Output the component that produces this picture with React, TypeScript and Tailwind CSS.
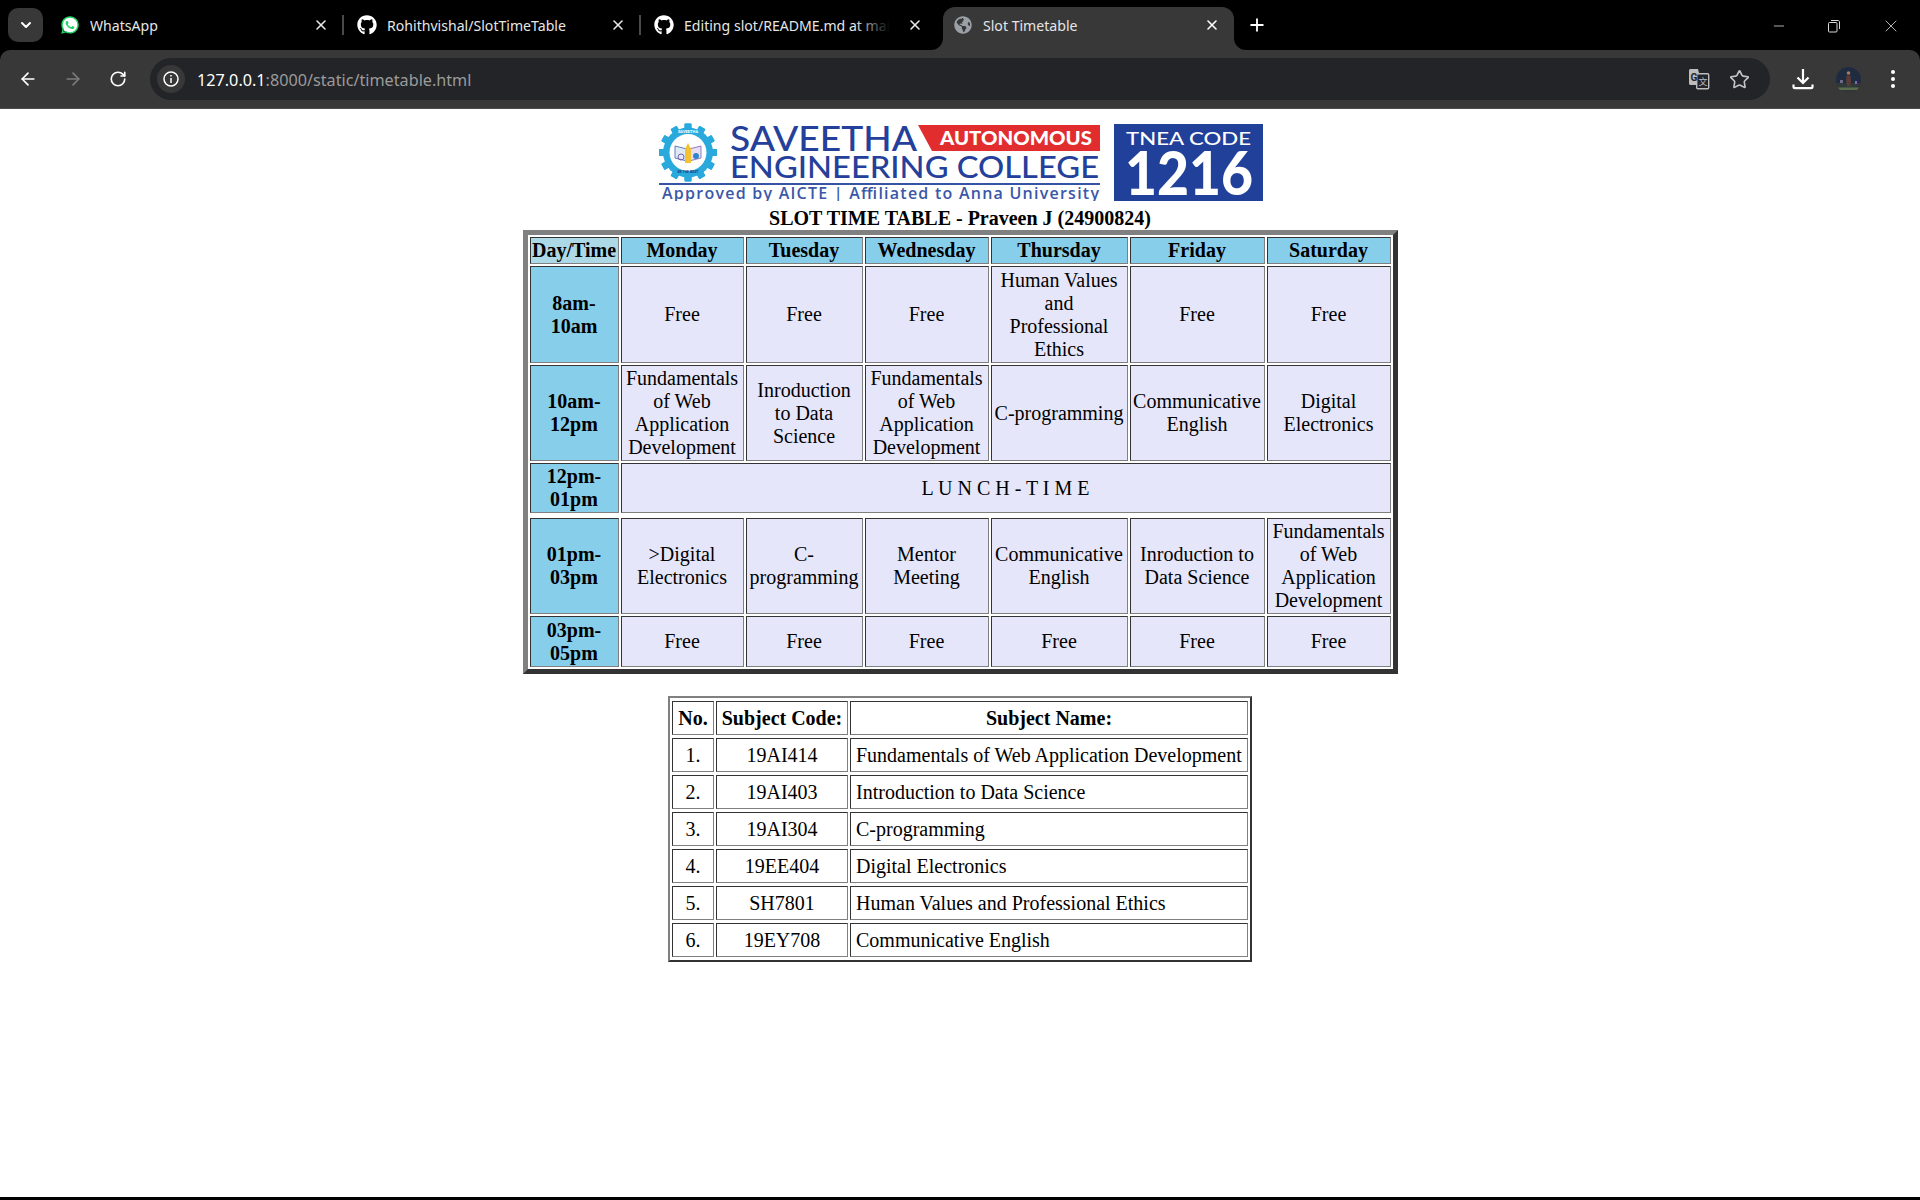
import React from "react";
import { ArrowLeft, ArrowRight, ChevronDown, Minus, Plus, RotateCw, Star, X } from "lucide-react";
import { FaGithub, FaGlobeAmericas, FaWhatsapp } from "react-icons/fa";

const timeCell =
  "bg-[#87ceeb] border border-t-[#333] border-l-[#333] border-r-[#808080] border-b-[#808080] p-px text-center font-bold";
const headCell =
  "bg-[#87ceeb] border border-t-[#333] border-l-[#333] border-r-[#808080] border-b-[#808080] p-px text-center font-bold";
const slotCell =
  "bg-[#e6e6fa] border border-t-[#333] border-l-[#333] border-r-[#808080] border-b-[#808080] p-px text-center font-normal whitespace-pre-line";
const subCell =
  "h-[34px] border border-t-[#333] border-l-[#333] border-r-[#808080] border-b-[#808080] py-0 px-[5px]";

const days = ["Monday", "Tuesday", "Wednesday", "Thursday", "Friday", "Saturday"];

const rows = [
  { time: "8am-10am", height: "h-[97px]", slots: ["Free", "Free", "Free", "Human Values\nand\nProfessional\nEthics", "Free", "Free"] },
  {
    time: "10am-12pm",
    height: "",
    slots: [
      "Fundamentals of Web Application Development",
      "Inroduction to Data Science",
      "Fundamentals of Web Application Development",
      "C-programming",
      "Communicative English",
      "Digital Electronics",
    ],
  },
];

const rowsAfterLunch = [
  {
    time: "01pm-03pm",
    height: "",
    slots: [
      ">Digital Electronics",
      "C-programming",
      "Mentor Meeting",
      "Communicative English",
      "Inroduction to Data Science",
      "Fundamentals of Web Application Development",
    ],
  },
  { time: "03pm-05pm", height: "h-[51px]", slots: ["Free", "Free", "Free", "Free", "Free", "Free"] },
];

const subjects = [
  ["1.", "19AI414", "Fundamentals of Web Application Development"],
  ["2.", "19AI403", "Introduction to Data Science"],
  ["3.", "19AI304", "C-programming"],
  ["4.", "19EE404", "Digital Electronics"],
  ["5.", "SH7801", "Human Values and Professional Ethics"],
  ["6.", "19EY708", "Communicative English"],
];

const teeth = [0, 30, 60, 90, 120, 150, 180, 210, 240, 270, 300, 330];

const SlotRow = ({ time, slots, height }: { time: string; slots: string[]; height: string }) => (
  <tr className={height}>
    <th className={timeCell}>{time}</th>
    {slots.map((s, i) => (
      <td key={i} className={slotCell}>
        {s}
      </td>
    ))}
  </tr>
);

const Tab = ({ icon, title, fade }: { icon: React.ReactNode; title: string; fade?: boolean }) => (
  <div className="relative flex h-[36px] w-[297px] items-center pl-[13px]">
    <div className="flex w-[20px] justify-center">{icon}</div>
    <div className="relative ml-[10px] w-[221px] overflow-hidden whitespace-nowrap text-[14.1px] text-[#e6e6e6]">
      {title}
      {fade && <div className="absolute inset-y-0 right-0 w-[50px] bg-gradient-to-r from-transparent via-black via-70% to-black" />}
    </div>
    <X size={16} strokeWidth={2.4} className="ml-[2px] text-[#e8e8e8]" />
    {!fade && <div className="absolute right-0 top-[8px] h-[20px] w-[2px] bg-[#4a4a4a]" />}
  </div>
);

const WhatsAppIcon = () => (
  <div className="relative h-[20px] w-[20px]">
    <div className="absolute left-[2px] top-[2px] h-[16px] w-[16px] rounded-full bg-white" />
    <FaWhatsapp size={20} className="absolute left-0 top-0 text-[#25d366]" />
  </div>
);

const TranslateIcon = () => (
  <svg width="22" height="22" viewBox="0 0 22 22">
    <path d="M1 2.500C1 1.700 1.700 1 2.500 1h7.500l4 16H2.500C1.700 17 1 16.300 1 15.500z" fill="#bdbdbd" />
    <rect x="8.700" y="5.700" width="12" height="15" rx="1" fill="#23252a" stroke="#bdbdbd" strokeWidth="1.400" />
    <text x="2.500" y="12.500" fontSize="10" fontWeight="700" fontFamily="Roboto, sans-serif" fill="#23252a">G</text>
    <text x="10.500" y="16.500" fontSize="9" fontFamily="'Noto Sans CJK SC', sans-serif" fill="#bdbdbd">文</text>
  </svg>
);

const DownloadIcon = () => (
  <svg width="22" height="24" viewBox="0 0 22 24" fill="none" stroke="#ffffff" strokeWidth="2.200">
    <path d="M11 2v13M5.500 10.500 11 16l5.500-5.500" />
    <path d="M1.500 17.500v2.200c0 .9.700 1.400 1.500 1.400h16c.8 0 1.500-.5 1.500-1.400v-2.200" />
  </svg>
);

const Avatar = () => (
  <svg width="25" height="25" viewBox="0 0 25 25">
    <circle cx="12.500" cy="12.500" r="12.500" fill="#1f2b3f" />
    <path d="M0.500 16h24a12.500 12.500 0 0 1-24 0z" fill="#2f3a38" />
    <path d="M2 20.500h21l-2 2.500H4z" fill="#5b6b4e" />
    <circle cx="12.500" cy="6" r="1.800" fill="#a87b63" />
    <path d="M10.500 8.500h4l.6 6-1 5h-3l-1-5z" fill="#5a3a36" />
    <rect x="4" y="13" width="3" height="3" fill="#6f6a88" />
    <rect x="19" y="14" width="2" height="3" fill="#8a63b8" />
  </svg>
);

const CollegeLogo = () => (
  <svg width="605" height="78" viewBox="658 123 605 78">
    {/* emblem */}
    {teeth.map((a) => (
      <rect key={a} x="684.500" y="123.500" width="7" height="58" rx="1" fill="#2aa9dd" transform={`rotate(${a} 688 152.500)`} />
    ))}
    <circle cx="688" cy="152.500" r="25" fill="#2aa9dd" />
    <circle cx="688" cy="152.500" r="18.500" fill="#ffffff" />
    <path d="M675 146l12 3v12l-12-3z" fill="#dfeaf6" stroke="#3b62ad" strokeWidth=".8" />
    <path d="M701 146l-12 3v12l12-3z" fill="#e8def3" stroke="#7a5fb0" strokeWidth=".8" />
    <path d="M688 143l3 6v14h-6v-14z" fill="#f2c230" />
    <circle cx="681" cy="157" r="3" fill="none" stroke="#7a5fb0" strokeWidth="1" />
    <circle cx="696" cy="156" r="3" fill="#2e86c8" />
    <text x="688" y="133" textAnchor="middle" fontSize="4" fontWeight="700" fontFamily="Roboto, sans-serif" fill="#ffffff">SAVEETHA</text>
    <text x="688" y="173" textAnchor="middle" fontSize="3.500" fontWeight="700" fontFamily="Roboto, sans-serif" fill="#1b3f8f">BE THE BEST</text>

    {/* wordmark */}
    <text x="730" y="151" fontSize="35" fontWeight="500" fontFamily="Lato, sans-serif" fill="#24409a" textLength="187" lengthAdjust="spacingAndGlyphs">SAVEETHA</text>
    <polygon points="918,125 1100,125 1100,151 932,151" fill="#e22d2f" />
    <text x="940" y="144.500" fontSize="19" fontWeight="900" fontFamily="Lato, sans-serif" fill="#ffffff" textLength="152" lengthAdjust="spacingAndGlyphs">AUTONOMOUS</text>
    <text x="730" y="178" fontSize="30" fontWeight="500" fontFamily="Lato, sans-serif" fill="#24409a" textLength="369" lengthAdjust="spacingAndGlyphs">ENGINEERING COLLEGE</text>
    <rect x="659" y="183" width="441" height="2" fill="#3653a6" />
    <text x="662" y="199" fontSize="16" fontWeight="600" fontFamily="'Open Sans', sans-serif" fill="#3b57a8" textLength="437" lengthAdjust="spacing">Approved by AICTE  |  Affiliated to Anna University</text>

    {/* code box */}
    <rect x="1114" y="124" width="149" height="77" fill="#20409a" />
    <text x="1126" y="145" fontSize="18" fontWeight="500" fontFamily="Lato, sans-serif" fill="#ffffff" textLength="125" lengthAdjust="spacingAndGlyphs">TNEA CODE</text>
    <text x="1125" y="195" fontSize="60" fontWeight="900" fontFamily="Lato, sans-serif" fill="#ffffff" textLength="128" lengthAdjust="spacingAndGlyphs">1216</text>
  </svg>
);

const App = () => {
  return (
    <div className="flex min-h-[1200px] flex-col bg-white font-['Liberation_Serif',serif] text-[20px] leading-[23px] text-black">
      {/* tab strip */}
      <div className="flex h-[50px] items-start bg-black pl-[8px] font-['Noto_Sans',sans-serif]">
        <div className="mt-[8px] flex h-[34px] w-[35px] items-center justify-center rounded-[10px] bg-[#383838]">
          <ChevronDown size={16} strokeWidth={3} className="text-white" />
        </div>
        <div className="ml-[4px] mt-[7px] flex">
          <Tab icon={<WhatsAppIcon />} title="WhatsApp" />
          <Tab icon={<FaGithub size={20} className="text-white" />} title="Rohithvishal/SlotTimeTable" />
          <Tab icon={<FaGithub size={20} className="text-white" />} title="Editing slot/README.md at main" fade />
          <div className="relative ml-[5px] flex h-[43px] w-[291px] items-start rounded-t-[12px] bg-[#383838] pl-[11px] pt-[7px]">
            <div className="absolute bottom-0 right-full h-[12px] w-[12px] bg-[#383838]">
              <div className="h-full w-full rounded-br-[12px] bg-black" />
            </div>
            <div className="absolute bottom-0 left-full h-[12px] w-[12px] bg-[#383838]">
              <div className="h-full w-full rounded-bl-[12px] bg-black" />
            </div>
            <FaGlobeAmericas size={18} className="mt-[2px] text-[#9aa0a6]" />
            <div className="ml-[11px] w-[220px] whitespace-nowrap text-[14.1px] text-[#e6e6e6]">Slot Timetable</div>
            <X size={16} strokeWidth={2.4} className="ml-[1px] mt-[3px] text-white" />
          </div>
        </div>
        <Plus size={20} strokeWidth={2.2} className="ml-[13px] mt-[15px] text-white" />
        <div className="ml-auto flex items-center pt-[16px] text-[#d8d8d8]">
          <Minus size={16} strokeWidth={1.2} className="mr-px" />
          <svg width="14" height="14" viewBox="0 0 14 14" fill="none" stroke="#d8d8d8" strokeWidth="1" className="ml-[39px]">
            <rect x="1.500" y="3.500" width="8.500" height="9.500" rx="1" />
            <path d="M4 1.500h7c1 0 1.500.5 1.500 1.500v7" />
          </svg>
          <X size={20} strokeWidth={1} className="ml-[40px] mr-[19px]" />
        </div>
      </div>

      {/* toolbar */}
      <div className="bg-black">
        <div className="flex h-[59px] items-center rounded-t-[10px] border-b border-b-[#4b4b4b] bg-[#383838] pl-[18px] pr-[18px] font-['Noto_Sans',sans-serif]">
          <ArrowLeft size={20} strokeWidth={2} className="text-white" />
          <ArrowRight size={20} strokeWidth={2} className="ml-[25px] text-[#7c7c7c]" />
          <RotateCw size={18} strokeWidth={2.2} className="ml-[26px] text-white" />
          <div className="ml-[23px] flex h-[42px] w-[1620px] items-center rounded-full bg-[#232427] pl-[7px] pr-[20px]">
            <div className="flex h-[28px] w-[28px] items-center justify-center rounded-full bg-[#383838]">
              <svg width="16" height="16" viewBox="0 0 16 16" fill="none" stroke="#ffffff" strokeWidth="1.500">
                <circle cx="8" cy="8" r="7" />
                <path d="M8 7v5M8 4v1.500" />
              </svg>
            </div>
            <div className="ml-[12px] mt-[2px] whitespace-nowrap text-[16.2px] text-white">
              127.0.0.1<span className="text-[#9b9b9b]">:8000/static/timetable.html</span>
            </div>
            <div className="ml-auto flex items-center gap-[19px]">
              <TranslateIcon />
              <Star size={21} strokeWidth={1.9} className="text-[#c4c4c4]" />
            </div>
          </div>
          <div className="ml-[22px]">
            <DownloadIcon />
          </div>
          <div className="ml-[22px]">
            <Avatar />
          </div>
          <div className="ml-[30px] flex flex-col gap-[3px]">
            <div className="h-[4px] w-[4px] rounded-full bg-white" />
            <div className="h-[4px] w-[4px] rounded-full bg-white" />
            <div className="h-[4px] w-[4px] rounded-full bg-white" />
          </div>
        </div>
      </div>

      {/* page */}
      <div className="flex flex-1 flex-col items-center pt-[14px]">
        <CollegeLogo />
        <div className="mt-[6px] text-center font-bold">SLOT TIME TABLE - Praveen J (24900824)</div>

        <table className="w-[875px] table-fixed border-separate border-spacing-[2px] border-[5px] border-t-[#808080] border-l-[#808080] border-r-[#333] border-b-[#333]">
          <colgroup>
            <col className="w-[89px]" />
            <col className="w-[123px]" />
            <col className="w-[117px]" />
            <col className="w-[124px]" />
            <col className="w-[137px]" />
            <col className="w-[135px]" />
            <col className="w-[124px]" />
          </colgroup>
          <tbody>
            <tr>
              <th className="border border-t-[#333] border-l-[#333] border-r-[#808080] border-b-[#808080] bg-[#add8e6] p-0 text-center font-bold whitespace-nowrap">
                Day/Time
              </th>
              {days.map((d) => (
                <th key={d} className={headCell}>
                  {d}
                </th>
              ))}
            </tr>
            {rows.map((r) => (
              <SlotRow key={r.time} time={r.time} slots={r.slots} height={r.height} />
            ))}
            <tr>
              <th className={timeCell}>12pm-01pm</th>
              <td colSpan={6} className={slotCell}>
                L U N C H - T I M E
              </td>
            </tr>
            <tr>
              <td colSpan={7} className="h-px p-0 text-[0px] leading-[0px]" />
            </tr>
            {rowsAfterLunch.map((r) => (
              <SlotRow key={r.time} time={r.time} slots={r.slots} height={r.height} />
            ))}
          </tbody>
        </table>

        <table className="mt-[22px] w-[584px] table-fixed border-separate border-spacing-x-[2px] border-spacing-y-[3px] border-2 border-t-[#808080] border-l-[#808080] border-r-[#333] border-b-[#333]">
          <colgroup>
            <col className="w-[42px]" />
            <col className="w-[132px]" />
            <col className="w-[398px]" />
          </colgroup>
          <tbody>
            <tr>
              <th className={`${subCell} text-center font-bold !px-0`}>No.</th>
              <th className={`${subCell} text-center font-bold !px-0`}>Subject Code:</th>
              <th className={`${subCell} text-center font-bold`}>Subject Name:</th>
            </tr>
            {subjects.map(([no, code, name]) => (
              <tr key={no}>
                <td className={`${subCell} text-center`}>{no}</td>
                <td className={`${subCell} text-center`}>{code}</td>
                <td className={`${subCell} text-left`}>{name}</td>
              </tr>
            ))}
          </tbody>
        </table>
      </div>
      <div className="h-[3px] bg-black" />
    </div>
  );
};

export default App;
